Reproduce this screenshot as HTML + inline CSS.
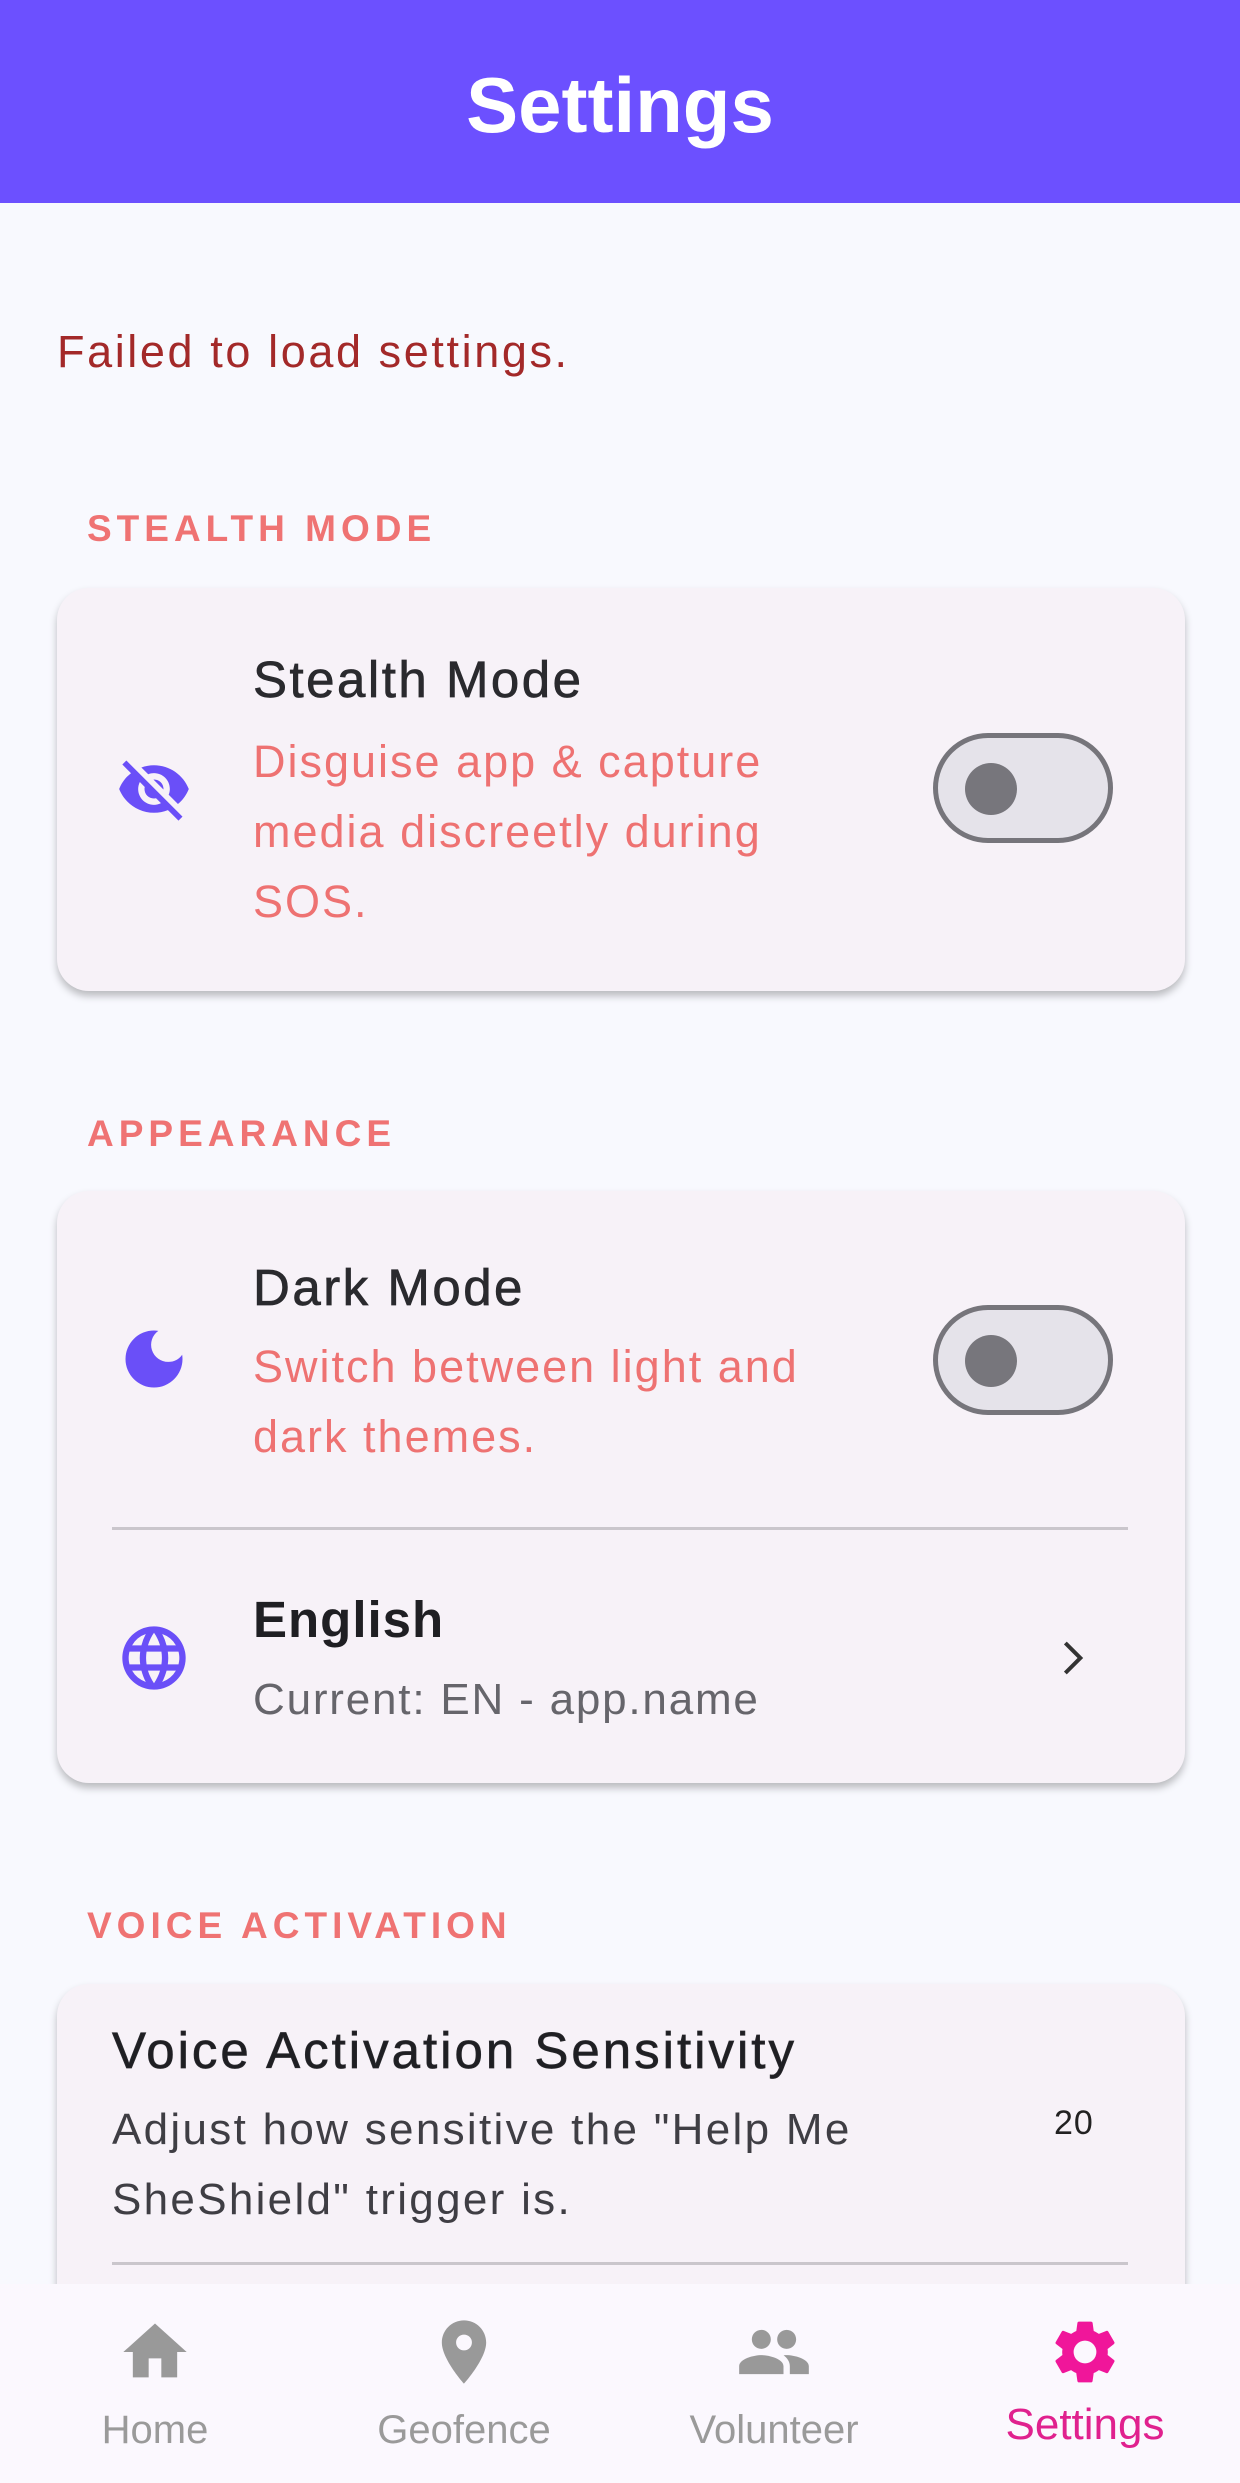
<!DOCTYPE html>
<html><head><meta charset="utf-8"><style>
*{margin:0;padding:0;box-sizing:border-box}
body{width:1240px;height:2483px;background:#f8f9fe;font-family:"Liberation Sans",sans-serif;position:relative;overflow:hidden}
.a{position:absolute;white-space:nowrap}
.hdr{position:absolute;left:0;top:0;width:1240px;height:203px;background:#6c50ff;color:#fff;font-weight:bold;font-size:78px;text-align:center;line-height:210px}
.sec{font-size:37px;font-weight:bold;color:#ef7373;letter-spacing:5px}
.card{position:absolute;left:57px;width:1128px;background:#f7f2f8;border-radius:32px;box-shadow:0 5px 8px rgba(0,0,0,.25)}
.t{font-size:51px;color:#2a2a2e;letter-spacing:2.5px;-webkit-text-stroke:.7px #2a2a2e}
.s{font-size:45px;color:#ee7272;line-height:70px;letter-spacing:2px}
.tog{position:absolute;width:180px;height:110px;border:5px solid #76757b;border-radius:55px;background:#e5e3ea}
.tog i{position:absolute;left:27px;top:25px;width:52px;height:52px;border-radius:50%;background:#77767c}
.div{position:absolute;left:112px;width:1016px;height:3px;background:#cac6cc}
.nav{position:absolute;left:0;top:2284px;width:1240px;height:199px;background:#fbf8fe}
.lbl{position:absolute;font-size:40px;color:#9a9a9a;transform:translateX(-50%);top:2408px}
</style></head><body>
<div class="hdr">Settings</div>
<div class="a" style="left:57px;top:326px;font-size:45px;letter-spacing:2.6px;color:#a32929">Failed to load settings.</div>

<div class="a sec" style="left:87px;top:508px">STEALTH MODE</div>
<div class="card" style="top:588px;height:403px"></div>
<svg class="a" style="left:116px;top:751px" width="76" height="76" viewBox="0 0 24 24"><path fill="#6a4ff8" d="M12 7c2.76 0 5 2.240 5 5 0 .65-.13 1.26-.36 1.830l2.92 2.920c1.510-1.260 2.700-2.890 3.430-4.750-1.730-4.390-6-7.500-11-7.500-1.400 0-2.740.25-3.980.7l2.160 2.160C10.740 7.130 11.350 7 12 7zM2 4.270l2.280 2.280.46.46C3.080 8.300 1.780 10.020 1 12c1.730 4.390 6 7.500 11 7.500 1.550 0 3.030-.3 4.380-.84l.42.42L19.730 22 21 20.730 3.270 3 2 4.270zM7.530 9.800l1.550 1.550c-.05.21-.08.43-.08.65 0 1.660 1.340 3 3 3 .22 0 .44-.03.65-.08l1.550 1.550c-.67.33-1.410.53-2.200.53-2.760 0-5-2.240-5-5 0-.79.2-1.530.53-2.200zm4.310-.78l3.150 3.150.02-.16c0-1.660-1.340-3-3-3l-.17.01z"/></svg>
<div class="a t" style="left:253px;top:650px">Stealth Mode</div>
<div class="a s" style="left:253px;top:727px">Disguise app &amp; capture<br>media discreetly during<br>SOS.</div>
<div class="tog" style="left:933px;top:733px"><i></i></div>

<div class="a sec" style="left:87px;top:1113px">APPEARANCE</div>
<div class="card" style="top:1191px;height:592px"></div>
<svg class="a" style="left:116px;top:1321px" width="76" height="76" viewBox="0 0 24 24"><path fill="#6a4ff8" d="M12 3a9 9 0 1 0 9 9c0-.46-.04-.92-.1-1.36a5.39 5.39 0 0 1-4.4 2.26 5.4 5.4 0 0 1-3.14-9.8c-.44-.06-.9-.1-1.36-.1z"/></svg>
<div class="a t" style="left:253px;top:1258px">Dark Mode</div>
<div class="a s" style="left:253px;top:1332px">Switch between light and<br>dark themes.</div>
<div class="tog" style="left:933px;top:1305px"><i></i></div>
<div class="div" style="top:1527px"></div>
<svg class="a" style="left:116px;top:1620px" width="76" height="76" viewBox="0 0 24 24"><path fill="#6a4ff8" d="M11.99 2C6.47 2 2 6.48 2 12s4.47 10 9.99 10C17.52 22 22 17.52 22 12S17.52 2 11.99 2zm6.93 6h-2.95a15.65 15.65 0 0 0-1.38-3.56A8.03 8.03 0 0 1 18.92 8zM12 4.04c.83 1.2 1.48 2.53 1.91 3.96h-3.82c.43-1.43 1.08-2.76 1.91-3.960zM4.26 14C4.1 13.36 4 12.69 4 12s.1-1.36.26-2h3.38c-.08.66-.14 1.32-.14 2s.06 1.34.14 2H4.26zm.82 2h2.95c.32 1.25.78 2.45 1.38 3.56A7.99 7.99 0 0 1 5.08 16zm2.95-8H5.08a7.99 7.99 0 0 1 4.33-3.56A15.65 15.65 0 0 0 8.03 8zM12 19.96c-.83-1.2-1.48-2.53-1.91-3.96h3.82c-.43 1.43-1.08 2.76-1.91 3.96zM14.34 14H9.66c-.09-.66-.16-1.32-.16-2s.07-1.35.16-2h4.68c.09.65.16 1.32.16 2s-.07 1.34-.16 2zm.25 5.56c.6-1.11 1.06-2.31 1.38-3.56h2.95a8.03 8.03 0 0 1-4.33 3.56zM16.36 14c.08-.66.14-1.32.14-2s-.06-1.34-.14-2h3.38c.16.64.26 1.31.26 2s-.1 1.36-.26 2h-3.38z"/></svg>
<div class="a" style="left:253px;top:1590px;font-size:51px;font-weight:bold;color:#1f1f23;letter-spacing:1px">English</div>
<div class="a" style="left:253px;top:1675px;font-size:44px;color:#66656b;letter-spacing:1.8px">Current: EN - app.name</div>
<svg class="a" style="left:1052px;top:1638px" width="40" height="40" viewBox="0 0 24 24"><path d="M8 3l9 9-9 9" fill="none" stroke="#333" stroke-width="2.4"/></svg>

<div class="a sec" style="left:87px;top:1905px">VOICE ACTIVATION</div>
<div class="card" style="top:1984px;height:400px"></div>
<div class="a t" style="left:112px;top:2021px;color:#1f1f23;letter-spacing:3px">Voice Activation Sensitivity</div>
<div class="a" style="left:112px;top:2095px;font-size:44px;line-height:70px;color:#3f3e44;letter-spacing:2.3px">Adjust how sensitive the "Help Me<br>SheShield" trigger is.</div>
<div class="a" style="left:1054px;top:2104px;font-size:34px;color:#222;letter-spacing:1px">20</div>
<div class="div" style="top:2262px"></div>

<div class="nav"></div>
<svg class="a" style="left:117px;top:2314px" width="76" height="76" viewBox="0 0 24 24"><path fill="#999" d="M10 20v-6h4v6h5v-8h3L12 3 2 12h3v8z"/></svg>
<svg class="a" style="left:426px;top:2314px" width="76" height="76" viewBox="0 0 24 24"><path fill="#999" d="M12 2C8.13 2 5 5.13 5 9c0 5.25 7 13 7 13s7-7.75 7-13c0-3.87-3.13-7-7-7zm0 9.5a2.5 2.5 0 1 1 0-5 2.5 2.5 0 0 1 0 5z"/></svg>
<svg class="a" style="left:736px;top:2314px" width="76" height="76" viewBox="0 0 24 24"><path fill="#999" d="M16 11c1.66 0 2.99-1.34 2.99-3S17.66 5 16 5c-1.66 0-3 1.34-3 3s1.34 3 3 3zm-8 0c1.66 0 2.99-1.34 2.99-3S9.66 5 8 5C6.34 5 5 6.34 5 8s1.34 3 3 3zm0 2c-2.33 0-7 1.17-7 3.5V19h14v-2.5c0-2.33-4.67-3.5-7-3.5zm8 0c-.29 0-.62.02-.97.05 1.16.84 1.97 1.97 1.97 3.45V19h6v-2.5c0-2.33-4.67-3.5-7-3.5z"/></svg>
<svg class="a" style="left:1047px;top:2314px" width="76" height="76" viewBox="0 0 24 24"><path fill="#f0169a" d="M19.14 12.94c.04-.3.06-.61.06-.94 0-.32-.02-.64-.07-.94l2.030-1.580a.49.49 0 0 0 .12-.61l-1.920-3.320a.49.49 0 0 0-.59-.22l-2.390.96c-.5-.38-1.030-.7-1.620-.94l-.36-2.540a.48.48 0 0 0-.48-.41h-3.840c-.24 0-.43.17-.47.41l-.36 2.540c-.59.24-1.130.57-1.620.94l-2.390-.96a.48.48 0 0 0-.59.22L2.740 8.870c-.12.21-.08.47.12.61l2.030 1.580c-.05.3-.09.63-.09.94s.02.64.07.94l-2.030 1.580a.49.49 0 0 0-.12.61l1.920 3.320c.12.22.37.29.59.22l2.390-.96c.5.38 1.030.7 1.620.94l.36 2.540c.05.24.24.41.48.41h3.840c.24 0 .44-.17.47-.41l.36-2.540c.59-.24 1.130-.56 1.620-.94l2.390.96c.22.08.47 0 .59-.22l1.920-3.320c.12-.22.07-.47-.12-.61l-2.010-1.580zM12 15.6A3.6 3.6 0 1 1 12 8.4a3.6 3.6 0 0 1 0 7.2z"/></svg>
<div class="lbl" style="left:155px">Home</div>
<div class="lbl" style="left:464px">Geofence</div>
<div class="lbl" style="left:774px">Volunteer</div>
<div class="lbl" style="left:1085px;top:2400px;font-size:44px;color:#e0218e">Settings</div>
</body></html>
